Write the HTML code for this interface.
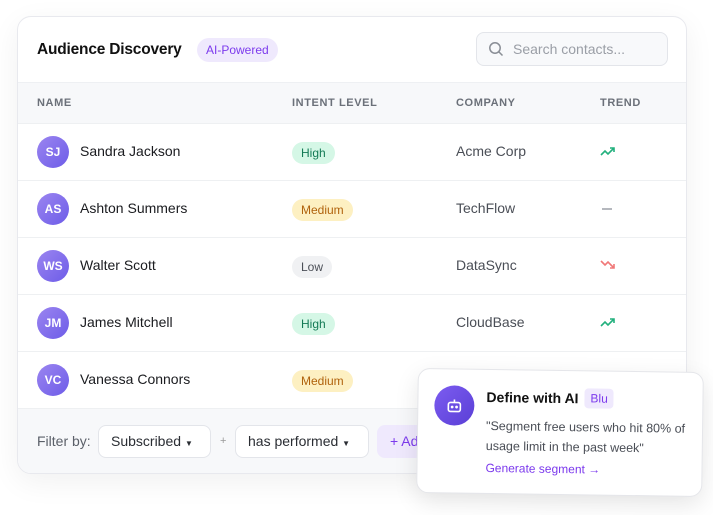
<!DOCTYPE html>
<html><head><meta charset="utf-8"><style>
*{box-sizing:border-box;margin:0;padding:0}
body{width:713px;height:515px;background:#fff;font-family:"Liberation Sans",sans-serif;position:relative;overflow:hidden}
.card{position:absolute;left:17px;top:16px;width:670px;height:458px;border:1px solid #e8e9ee;border-radius:14px;background:#fff;box-shadow:0 8px 30px rgba(0,0,0,.06);overflow:hidden}
.title{position:absolute;left:19px;top:24px;font-size:15.5px;font-weight:bold;color:#111;letter-spacing:-.2px}
.badge{position:absolute;left:179px;top:21px;height:24px;padding:0 9px;line-height:24px;border-radius:12px;background:#efe9fd;color:#7c3aed;font-size:12px}
.search{position:absolute;left:458px;top:15px;width:192px;height:34px;border:1px solid #e3e5ea;border-radius:8px;background:#f8f9fb;font-size:14px;color:#9a9ea6;line-height:32px;padding-left:36px}
.search svg{position:absolute;left:11px;top:8px}
.th{position:absolute;top:65px;left:0;width:670px;height:41px;background:#f7f8fa;border-top:1px solid #eef0f3}
.th span{position:absolute;top:14px;font-size:11px;font-weight:bold;color:#6b7079;letter-spacing:.6px}
.row{position:absolute;left:0;width:670px;height:57px;border-top:1px solid #eef0f2}
.av{position:absolute;left:19px;top:12px;width:32px;height:32px;border-radius:50%;background:linear-gradient(135deg,#9b85f0,#6d5ce8);color:#fff;font-size:12px;font-weight:bold;text-align:center;line-height:32px}
.nm{position:absolute;left:62px;top:19px;font-size:14px;color:#1a1b1f}
.pill{position:absolute;left:274px;top:18px;height:22px;line-height:22px;padding:0 9px;border-radius:11px;font-size:12px}
.hi{background:#d5f7e6;color:#137a55}.me{background:#fdf0c2;color:#b0620c}.lo{background:#f0f1f3;color:#4b4f57}
.co{position:absolute;left:438px;top:19px;font-size:14px;color:#4a4e56}
.tr{position:absolute;left:582px;top:21px}
.foot{position:absolute;left:0;top:391px;width:670px;height:67px;background:#f7f8fa;border-top:1px solid #eef0f2}
.fl{position:absolute;top:24px;font-size:14px;color:#5b6069}
.dd{position:absolute;top:16px;height:33px;border:1px solid #e3e5ea;border-radius:8px;background:#fff;font-size:14px;color:#2a2d33;line-height:31px;padding-left:12px}
.ai{position:absolute;left:417px;top:370px;width:286px;height:125px;background:#fff;border:1px solid #e5e6ea;border-radius:12px;box-shadow:0 8px 24px rgba(0,0,0,.1);transform:rotate(0.8deg)}
</style></head><body>
<div class="card">
<div class="title">Audience Discovery</div>
<div class="badge">AI-Powered</div>
<div class="search"><svg width="16" height="16" viewBox="0 0 16 16" fill="none" stroke="#8a8e96" stroke-width="1.5"><circle cx="7" cy="7" r="5.2"/><path d="M11 11l3.5 3.5"/></svg>Search contacts...</div>
<div class="th"><span style="left:19px">NAME</span><span style="left:274px">INTENT LEVEL</span><span style="left:438px">COMPANY</span><span style="left:582px">TREND</span></div>
<div class="row" style="top:106px"><div class="av">SJ</div><div class="nm">Sandra Jackson</div><div class="pill hi">High</div><div class="co">Acme Corp</div><svg class="tr" width="16" height="12" viewBox="0 0 16 12" fill="none" stroke="#22b07d" stroke-width="1.6"><path d="M1 10l4-4 3 3 6-6M10 3h4v4"/></svg></div>
<div class="row" style="top:163px"><div class="av">AS</div><div class="nm">Ashton Summers</div><div class="pill me">Medium</div><div class="co">TechFlow</div><div style="position:absolute;left:584px;top:27px;width:10px;height:2px;background:#b5b8be"></div></div>
<div class="row" style="top:220px"><div class="av">WS</div><div class="nm">Walter Scott</div><div class="pill lo">Low</div><div class="co">DataSync</div><svg class="tr" width="16" height="12" viewBox="0 0 16 12" fill="none" stroke="#f07878" stroke-width="1.6"><path d="M1 2l4 4 3-3 6 6M10 9h4V5"/></svg></div>
<div class="row" style="top:277px"><div class="av">JM</div><div class="nm">James Mitchell</div><div class="pill hi">High</div><div class="co">CloudBase</div><svg class="tr" width="16" height="12" viewBox="0 0 16 12" fill="none" stroke="#22b07d" stroke-width="1.6"><path d="M1 10l4-4 3 3 6-6M10 3h4v4"/></svg></div>
<div class="row" style="top:334px"><div class="av">VC</div><div class="nm">Vanessa Connors</div><div class="pill me">Medium</div></div>
<div class="foot">
<div class="fl" style="left:19px">Filter by:</div>
<div class="dd" style="left:80px;width:113px">Subscribed <span style="font-size:8px">▼</span></div>
<div class="fl" style="left:202px;font-size:11px;top:26px;color:#999">+</div>
<div class="dd" style="left:217px;width:134px">has performed <span style="font-size:8px">▼</span></div>
<div class="dd" style="left:359px;width:80px;background:#efe9fd;border-color:#efe9fd;color:#7c3aed">+ Add</div>
</div>
</div>
<div class="ai">
<div style="position:absolute;left:16px;top:16px;width:40px;height:40px;border-radius:50%;background:linear-gradient(135deg,#7c5cf0,#5a3fd6)"><svg style="position:absolute;left:11px;top:11px" width="18" height="18" viewBox="0 0 18 18" fill="none" stroke="#fff" stroke-width="1.6"><rect x="3" y="6" width="12" height="9" rx="2"/><path d="M9 3v3"/><circle cx="6.8" cy="10.5" r=".6" fill="#fff"/><circle cx="11.2" cy="10.5" r=".6" fill="#fff"/></svg></div>
<div style="position:absolute;left:68px;top:19px;font-size:14px;font-weight:bold;color:#111">Define with AI</div>
<div style="position:absolute;left:166px;top:17px;height:20px;line-height:20px;padding:0 6px;border-radius:4px;background:#efe9fd;color:#7c3aed;font-size:12px">Blu</div>
<div style="position:absolute;left:68px;top:46px;width:210px;font-size:12.5px;line-height:20px;color:#4a4e56">"Segment free users who hit 80% of usage limit in the past week"</div>
<div style="position:absolute;left:68px;top:91px;font-size:12px;color:#7c3aed">Generate segment →</div>
</div>
</body></html>
